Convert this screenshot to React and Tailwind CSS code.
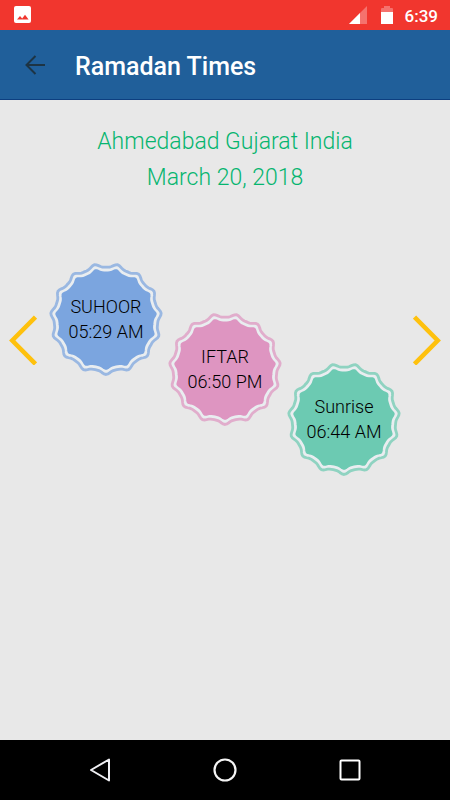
const times = [
  { label: "SUHOOR", time: "05:29 AM", color: "text-[#7ba5df]", offset: "mt-0" },
  { label: "IFTAR", time: "06:50 PM", color: "text-[#de95c1]", offset: "mt-[50px]" },
  { label: "Sunrise", time: "06:44 AM", color: "text-[#6ccab2]", offset: "mt-[100px]" },
]

// Closed wavy outline with 15 narrow bumps, one of them pointing straight down
const scallop = (radius, wave) => {
  const points = []
  for (let deg = 0; deg < 360; deg += 2) {
    const a = (deg * Math.PI) / 180
    const r = radius + wave * (Math.cos(15 * a) + 0.25 * Math.cos(30 * a))
    points.push(`${(57 + r * Math.sin(a)).toFixed(2)} ${(57 + r * Math.cos(a)).toFixed(2)}`)
  }
  return `M${points.join("L")}Z`
}

const outerPath = scallop(53.2, 1.8)
const gapPath = scallop(50.4, 1.7)
const innerPath = scallop(50, 1.6)

function Badge({ label, time, color, offset }) {
  return (
    <div className={`relative flex h-[114px] w-[114px] flex-col items-center justify-center ${offset}`}>
      <svg viewBox="0 0 114 114" className={`absolute inset-0 h-full w-full ${color}`} aria-hidden="true">
        <path d={innerPath} fill="currentColor" />
        <path d={gapPath} fill="none" stroke="#e9edf0" strokeWidth="3" />
        <path d={outerPath} fill="none" stroke="#e8e8e8" strokeWidth="2.8" />
        <path d={outerPath} fill="none" stroke="currentColor" strokeOpacity="0.72" strokeWidth="2.8" />
      </svg>
      <span className="relative text-lg leading-[25px]">{label}</span>
      <span className="relative text-lg leading-[25px]">{time}</span>
    </div>
  )
}

function StatusBar() {
  return (
    <div className="flex h-[30px] items-center bg-[#f1362e] px-3 text-white">
      <svg viewBox="0 0 20 20" className="h-5 w-5" aria-hidden="true">
        <rect x="2" y="1" width="17" height="17" rx="2" fill="white" />
        <path d="M5 14.5L8 11L10.2 13.4L13 9.8L16.6 14.5Z" fill="#f1362e" />
      </svg>
      <svg viewBox="0 0 18 18" className="ml-auto h-[18px] w-[18px]" aria-hidden="true">
        <path d="M18 0V18H0Z" fill="white" fillOpacity="0.3" />
        <path d="M11 7V18H0Z" fill="white" />
      </svg>
      <svg viewBox="0 0 12 18" className="ml-[14px] h-[18px] w-3" aria-hidden="true">
        <path d="M0 6V3Q0 2 1 2H3V0H9V2H11Q12 2 12 3V6Z" fill="white" fillOpacity="0.3" />
        <rect y="6" width="12" height="12" fill="white" />
      </svg>
      <span className="ml-3 pt-0.5 text-[17px] leading-6 font-medium">6:39</span>
    </div>
  )
}

function Header() {
  return (
    <header className="flex h-[70px] items-center border-b border-[#0d3f80] bg-[#205f9a] pl-6">
      <button aria-label="Back" className="flex w-[51px]">
        <svg viewBox="0 0 22 20" className="h-5 w-[22px]" fill="none" stroke="#1d3444" strokeWidth="2" aria-hidden="true">
          <path d="M21 10H3M11.5 1L2.5 10L11.5 19" />
        </svg>
      </button>
      <h1 className="pt-1 text-[25px] font-medium text-white">Ramadan Times</h1>
    </header>
  )
}

function NavBar() {
  return (
    <nav className="flex h-[60px] items-center justify-center gap-[101px] bg-black">
      <button aria-label="Back">
        <svg viewBox="0 0 24 24" className="h-6 w-6" fill="none" stroke="#f0f0f4" strokeWidth="2" strokeLinejoin="round" aria-hidden="true">
          <path d="M21 1.5V22.5L3 12Z" />
        </svg>
      </button>
      <button aria-label="Home">
        <svg viewBox="0 0 24 24" className="h-6 w-6" fill="none" stroke="#f5f5f5" strokeWidth="2.2" aria-hidden="true">
          <circle cx="12" cy="12" r="10.5" />
        </svg>
      </button>
      <button aria-label="Overview">
        <svg viewBox="0 0 24 24" className="h-6 w-6" fill="none" stroke="white" strokeWidth="2" aria-hidden="true">
          <rect x="2.5" y="2.5" width="19" height="19" rx="1" />
        </svg>
      </button>
    </nav>
  )
}

export default function App() {
  return (
    <div className="flex min-h-screen flex-col bg-[#e8e8e8] font-['Roboto',sans-serif] text-black">
      <StatusBar />
      <Header />

      <main className="flex-1">
        <div className="pt-6 text-center text-[23px] leading-9 font-light text-[#06b56f]">
          <p>Ahmedabad Gujarat India</p>
          <p>March 20, 2018</p>
        </div>

        <div className="mt-[66px] flex items-start justify-between px-[9px]">
          <button aria-label="Previous day" className="mt-[53px]">
            <svg viewBox="0 0 28 50" className="h-[50px] w-7" fill="none" stroke="#fec10d" strokeWidth="4.6" aria-hidden="true">
              <path d="M26.5 2L3.3 25.5L26.5 49" />
            </svg>
          </button>
          <div className="flex gap-[5px] font-light">
            {times.map((item) => (
              <Badge key={item.label} {...item} />
            ))}
          </div>
          <button aria-label="Next day" className="mt-[53px]">
            <svg viewBox="0 0 28 50" className="h-[50px] w-7" fill="none" stroke="#fec10d" strokeWidth="4.6" aria-hidden="true">
              <path d="M1.5 2L24.7 25.5L1.5 49" />
            </svg>
          </button>
        </div>
      </main>

      <NavBar />
    </div>
  )
}
